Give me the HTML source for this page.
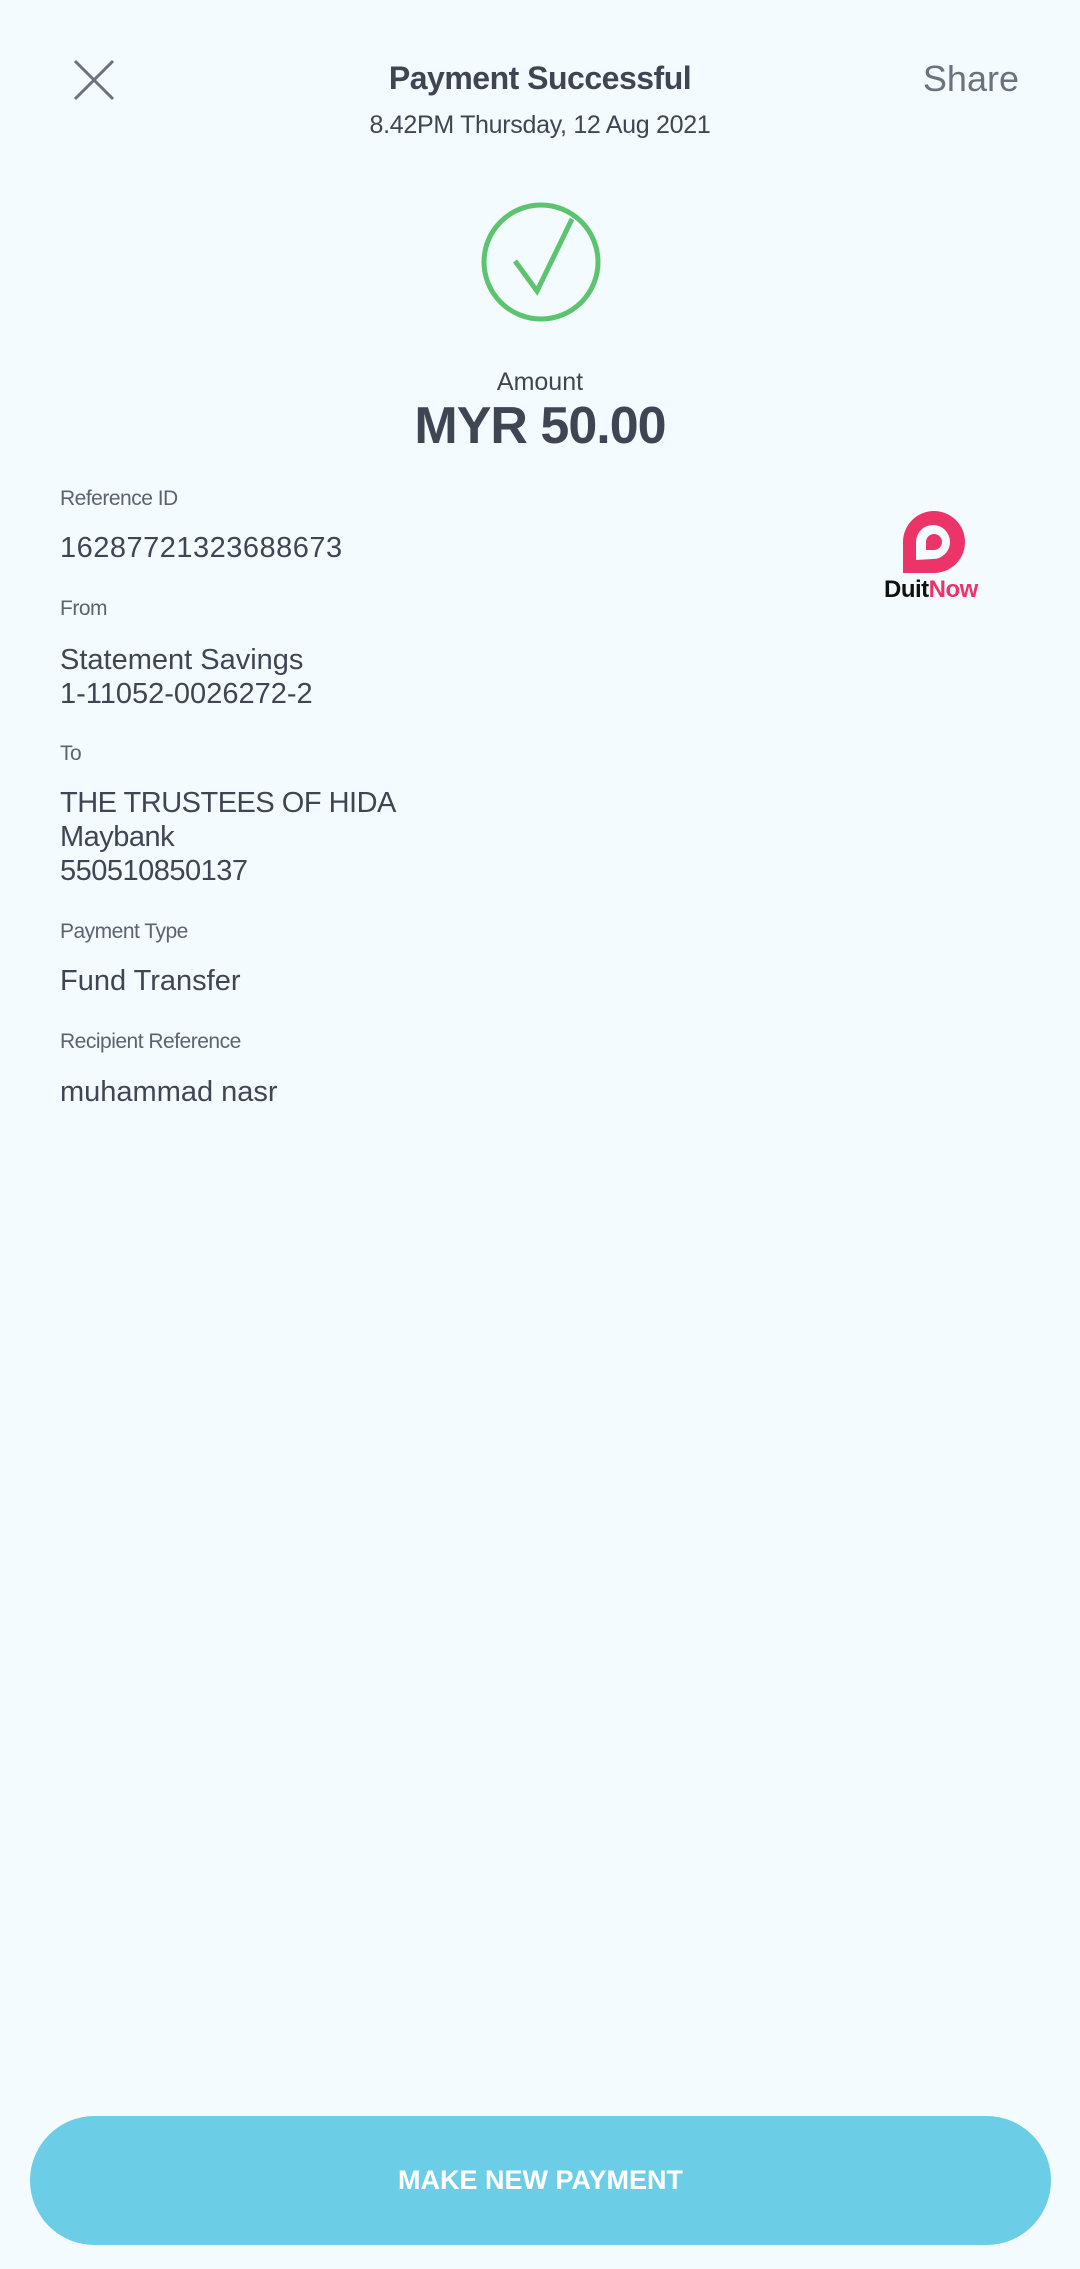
<!DOCTYPE html>
<html><head><meta charset="utf-8"><style>
body{margin:0;width:1080px;height:2269px;background:#f3fbfe;font-family:"Liberation Sans",sans-serif;color:#3f4653;position:relative;overflow:hidden}
.a{position:absolute;white-space:nowrap}
.c{left:0;width:1080px;text-align:center}
.lab{left:60px;font-size:21px;color:#5b6370;letter-spacing:-0.5px}
.val{left:60px;font-size:29px;line-height:34px;color:#3f4653}
</style></head><body>
<svg class="a" style="left:72px;top:58px" width="44" height="44" viewBox="0 0 44 44"><path d="M3 3L41 41M41 3L3 41" stroke="#6b727d" stroke-width="3" fill="none"/></svg>
<div class="a c" style="top:60px;font-size:32px;font-weight:bold;letter-spacing:-0.5px">Payment Successful</div>
<div class="a c" style="top:111px;font-size:25px;letter-spacing:-0.3px">8.42PM Thursday, 12 Aug 2021</div>
<div class="a" style="right:61px;top:58px;font-size:36px;color:#6b727d">Share</div>
<svg class="a" style="left:475px;top:196px" width="134" height="134" viewBox="0 0 134 134"><circle cx="66" cy="66" r="57" stroke="#5cc46e" stroke-width="5" fill="none"/><path d="M40 65L62 95L97 23" stroke="#5cc46e" stroke-width="5" fill="none"/></svg>
<div class="a c" style="top:368px;font-size:25px">Amount</div>
<div class="a c" style="top:396px;font-size:52px;font-weight:bold;letter-spacing:-1px">MYR 50.00</div>
<div class="a lab" style="top:487px">Reference ID</div>
<div class="a val" style="top:531px;letter-spacing:0.5px">16287721323688673</div>
<div class="a lab" style="top:597px">From</div>
<div class="a val" style="top:643px">Statement Savings<br>1-11052-0026272-2</div>
<div class="a lab" style="top:742px">To</div>
<div class="a val" style="top:786px;letter-spacing:-0.5px">THE TRUSTEES OF HIDA<br>Maybank<br>550510850137</div>
<div class="a lab" style="top:920px">Payment Type</div>
<div class="a val" style="top:964px">Fund Transfer</div>
<div class="a lab" style="top:1030px">Recipient Reference</div>
<div class="a val" style="top:1075px">muhammad nasr</div>
<svg class="a" style="left:900px;top:510px" width="70" height="68" viewBox="0 0 70 68"><path d="M3 66V32A31 31 0 1 1 34 63H3Z" fill="#ec3468"/><path d="M16 50V32A17 17 0 1 1 33 49Z" fill="#f3fbfe"/><path d="M26 40V32A8 8 0 1 1 34 40Z" fill="#ec3468"/></svg>
<div class="a" style="left:884px;top:576px;font-size:24px;font-weight:bold;letter-spacing:-0.5px"><span style="color:#111">Duit</span><span style="color:#ec3468">Now</span></div>
<div class="a" style="left:30px;top:2116px;width:1021px;height:129px;border-radius:65px;background:#6bcde6;color:#fff;font-size:27px;font-weight:bold;text-align:center;line-height:129px">MAKE NEW PAYMENT</div>
</body></html>
